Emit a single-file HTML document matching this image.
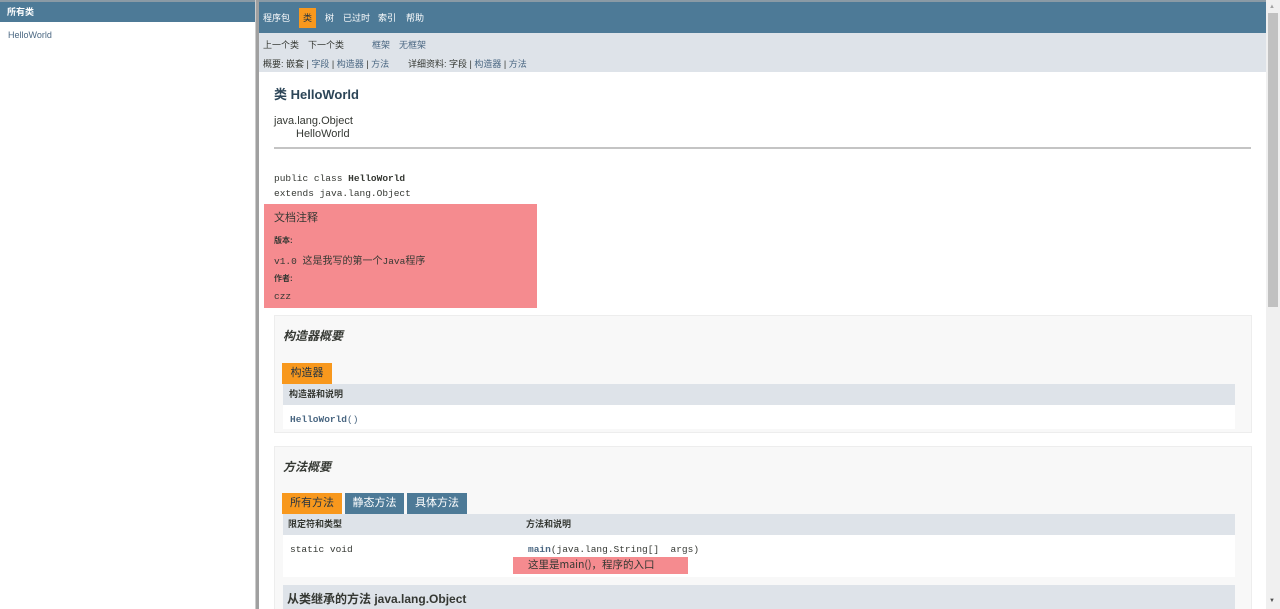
<!DOCTYPE html>
<html style="overflow:hidden"><head><meta charset="utf-8"><style>
*{margin:0;padding:0;box-sizing:border-box}
html,body{width:1280px;height:609px;overflow:hidden}
body{background:#fff;font-family:"Liberation Sans","Noto Sans CJK SC",sans-serif;color:#353833;position:relative}
.a{position:absolute}
.mono{font-family:"Liberation Mono","Noto Sans CJK SC",monospace}
.cj{font-family:"Noto Sans CJK SC",sans-serif}
.n{position:absolute;top:12px;font-size:9px;color:#fff;line-height:12px;white-space:nowrap}
</style></head><body>
<div class="a" style="left:0;top:0;width:1280px;height:2px;background:#8a9aa5"></div>
<!-- left frame -->
<div class="a" style="left:0;top:2px;width:255px;height:20px;background:#4d7a97;color:#fff;font-size:9px;font-weight:bold;line-height:20px;padding-left:7px" >所有类</div>
<div class="a" style="left:8px;top:30px;font-size:9px;color:#4a6782">HelloWorld</div>
<div class="a" style="left:255px;top:0;width:4px;height:609px;background:#a0a0a0;border-left:1px solid #ccc"></div>
<!-- scrollbar -->
<div class="a" style="left:1266px;top:0;width:14px;height:609px;background:#f0f0f0"></div>
<div class="a" style="left:1268px;top:13px;width:10px;height:294px;background:#c1c1c1"></div>
<div class="a" style="left:1269px;top:4px;font-size:6px;color:#a3a3a3">▲</div>
<div class="a" style="left:1269px;top:598px;font-size:6px;color:#505050">▼</div>
<!-- nav -->
<div class="a" style="left:259px;top:2px;width:1007px;height:31px;background:#4d7a97"></div>
<div class="a" style="left:299px;top:8px;width:17px;height:20px;background:#f8981d"></div>
<div class="n" style="left:263px">程序包</div>
<div class="n" style="left:303px;color:#253441">类</div>
<div class="n" style="left:325px">树</div>
<div class="n" style="left:343px">已过时</div>
<div class="n" style="left:378px">索引</div>
<div class="n" style="left:406px">帮助</div>
<div class="a" style="left:259px;top:33px;width:1007px;height:39px;background:#dee3e9"></div>
<div class="a" style="left:263px;top:38px;font-size:9px;white-space:pre;color:#353833">上一个类</div>
<div class="a" style="left:308px;top:38px;font-size:9px;white-space:pre;color:#353833">下一个类</div>
<div class="a" style="left:372px;top:38px;font-size:9px;white-space:pre;color:#4a6782">框架</div>
<div class="a" style="left:399px;top:38px;font-size:9px;white-space:pre;color:#4a6782">无框架</div>
<div class="a" style="left:263px;top:57px;font-size:9px;white-space:pre;color:#353833">概要: 嵌套 | <span style="color:#4a6782">字段</span> | <span style="color:#4a6782">构造器</span> | <span style="color:#4a6782">方法</span></div>
<div class="a" style="left:408px;top:57px;font-size:9px;white-space:pre;color:#353833">详细资料: 字段 | <span style="color:#4a6782">构造器</span> | <span style="color:#4a6782">方法</span></div>
<!-- title -->
<div class="a" style="left:274px;top:84px;font-size:13px;font-weight:bold;color:#2c4557">类 HelloWorld</div>
<div class="a" style="left:274px;top:115px;font-size:11px;color:#353833;line-height:13px">java.lang.Object<br><span style="padding-left:22px">HelloWorld</span></div>
<div class="a" style="left:274px;top:147px;width:977px;height:2px;background:#c4c4c4"></div>
<div class="a mono" style="left:274px;top:171px;font-size:9.5px;line-height:15px;color:#353833">public class <b>HelloWorld</b><br>extends java.lang.Object</div>
<!-- pink -->
<div class="a" style="left:264px;top:204px;width:273px;height:104px;background:#f58b8f"></div>
<div class="a" style="left:274px;top:209px;font-size:11px;color:#353833">文档注释</div>
<div class="a" style="left:274px;top:235px;font-size:8px;font-weight:bold">版本:</div>
<div class="a mono" style="left:274px;top:252px;font-size:9.5px">v1.0 <span class="cj" style="font-size:10px">这是我写的第一个</span>Java<span class="cj" style="font-size:10px">程序</span></div>
<div class="a" style="left:274px;top:273px;font-size:8px;font-weight:bold">作者:</div>
<div class="a mono" style="left:274px;top:291px;font-size:9.5px">czz</div>
<!-- constructor section -->
<div class="a" style="left:274px;top:315px;width:978px;height:118px;background:#f8f8f8;border:1px solid #ededed"></div>
<div class="a" style="left:283px;top:327px;font-size:12px;font-weight:bold;font-style:italic">构造器概要</div>
<div class="a" style="left:282px;top:363px;width:50px;height:21px;background:#f8981d;font-size:11px;line-height:21px;text-align:center;color:#253441">构造器</div>
<div class="a" style="left:283px;top:384px;width:952px;height:21px;background:#dee3e9;font-size:9px;font-weight:bold;line-height:21px;padding-left:6px">构造器和说明</div>
<div class="a" style="left:283px;top:405px;width:952px;height:24px;background:#fff"></div>
<div class="a mono" style="left:290px;top:414px;font-size:9.5px;color:#4a6782"><b>HelloWorld</b>()</div>
<!-- method section -->
<div class="a" style="left:274px;top:446px;width:978px;height:163px;background:#f8f8f8;border:1px solid #ededed;border-bottom:none"></div>
<div class="a" style="left:283px;top:458px;font-size:12px;font-weight:bold;font-style:italic">方法概要</div>
<div class="a" style="left:282px;top:493px;width:60px;height:21px;background:#f8981d;font-size:11px;line-height:21px;text-align:center;color:#253441">所有方法</div>
<div class="a" style="left:345px;top:493px;width:59px;height:21px;background:#4d7a97;font-size:11px;line-height:21px;text-align:center;color:#fff">静态方法</div>
<div class="a" style="left:407px;top:493px;width:60px;height:21px;background:#4d7a97;font-size:11px;line-height:21px;text-align:center;color:#fff">具体方法</div>
<div class="a" style="left:283px;top:514px;width:952px;height:21px;background:#dee3e9;font-size:9px;font-weight:bold;line-height:21px"><span style="position:absolute;left:5px">限定符和类型</span><span style="position:absolute;left:243px">方法和说明</span></div>
<div class="a" style="left:283px;top:535px;width:952px;height:42px;background:#fff"></div>
<div class="a mono" style="left:290px;top:544px;font-size:9.5px">static void</div>
<div class="a mono" style="left:528px;top:544px;font-size:9.5px;white-space:pre"><b style="color:#4a6782">main</b>(java.lang.String[]  args)</div>
<div class="a" style="left:513px;top:557px;width:175px;height:17px;background:#f58b8f"></div>
<div class="a cj" style="left:528px;top:558px;font-size:10.5px;line-height:14px">这里是main()，程序的入口</div>
<div class="a" style="left:283px;top:585px;width:952px;height:24px;background:#dee3e9;font-size:12px;font-weight:bold;line-height:28px;padding-left:4px">从类继承的方法 java.lang.Object</div>
</body></html>
